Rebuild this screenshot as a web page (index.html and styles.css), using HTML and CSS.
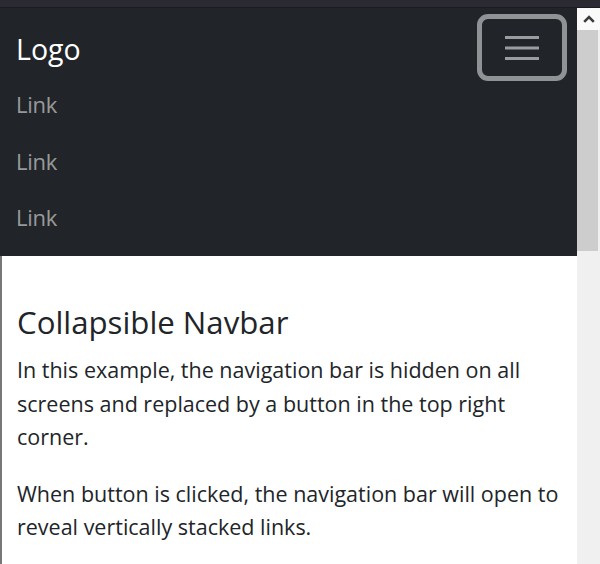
FILE: index.html
```
<!DOCTYPE html>
<html lang="en">
<head>
<meta charset="utf-8">
<title>Collapsible Navbar</title>
<link rel="stylesheet" href="styles.css">
</head>
<body>
<div class="topbar"></div>
<div class="window">
  <main class="page">
    <nav class="navbar">
      <div class="navbar-top">
        <a class="brand" href="#">Logo</a>
        <button class="toggler" type="button" aria-label="Toggle navigation">
          <svg width="34" height="26" viewBox="0 0 34 26" aria-hidden="true">
            <path d="M0 2.5H34M0 13H34M0 23.5H34" stroke="#9a9c9f" stroke-width="3" fill="none"/>
          </svg>
        </button>
      </div>
      <ul class="nav-links">
        <li><a href="#">Link</a></li>
        <li><a href="#">Link</a></li>
        <li><a href="#">Link</a></li>
      </ul>
    </nav>
    <div class="content">
      <h3 class="title">Collapsible Navbar</h3>
      <p class="text">In this example, the navigation bar is hidden on all screens and replaced by a button in the top right corner.</p>
      <p class="text">When button is clicked, the navigation bar will open to reveal vertically stacked links.</p>
    </div>
  </main>
  <div class="scrollbar">
    <div class="sb-arrow">
      <svg width="12" height="8" viewBox="0 0 12 8" aria-hidden="true">
        <path d="M1.2 6.8L6 2L10.8 6.8" stroke="#3c3c3c" stroke-width="2.6" fill="none"/>
      </svg>
    </div>
    <div class="sb-thumb"></div>
    <div class="sb-track"></div>
  </div>
</div>
</body>
</html>
```
FILE: styles.css
```
* { box-sizing: border-box; }

html, body {
  margin: 0;
  padding: 0;
  width: 600px;
  height: 564px;
  overflow: hidden;
  background: #ffffff;
  font-family: "Open Sans", "Noto Sans", sans-serif;
}

.topbar {
  height: 8px;
  background: #2b2a33;
  border-bottom: 1px solid #1c1b22;
}

.window {
  display: flex;
  height: 556px;
}

.page {
  flex: 1;
  display: flex;
  flex-direction: column;
  min-width: 0;
}

.navbar {
  background: #212529;
  padding: 6px 10px 10px 16px;
}

.navbar-top {
  display: flex;
  justify-content: space-between;
  align-items: flex-start;
}

.brand {
  display: block;
  padding: 15px 0 7.5px;
  font-size: 28.5px;
  line-height: 40px;
  color: #ffffff;
  text-decoration: none;
}

.toggler {
  width: 90px;
  height: 67px;
  margin-bottom: -4.5px;
  padding: 0;
  border: 5px solid #909396;
  border-radius: 11px;
  background: transparent;
  display: flex;
  align-items: center;
  justify-content: center;
}

.toggler svg { display: block; }

.nav-links {
  list-style: none;
  margin: 0;
  padding: 0;
}

.nav-links a {
  display: block;
  padding: 11.75px 0;
  font-size: 22px;
  line-height: 33px;
  letter-spacing: -0.3px;
  color: rgba(255, 255, 255, 0.55);
  text-decoration: none;
}

.content {
  flex: 1;
  border-left: 2px solid #777777;
  padding: 46px 8px 0 15px;
  color: #212529;
}

.title {
  margin: 0 0 11.3px;
  font-size: 31.2px;
  line-height: 40px;
  font-weight: 400;
}

.text {
  margin: 0 0 23.2px;
  font-size: 21.5px;
  line-height: 33.4px;
}

.scrollbar {
  width: 23px;
  display: flex;
  flex-direction: column;
  background: #f0f0f0;
}

.sb-arrow {
  height: 22px;
  background: #fafafa;
  display: flex;
  align-items: center;
  justify-content: center;
}

.sb-arrow svg { display: block; }

.sb-thumb {
  height: 221px;
  margin-right: 2px;
  background: #cdcdcd;
}

.sb-track {
  flex: 1;
  background: #f0f0f0;
}
```
